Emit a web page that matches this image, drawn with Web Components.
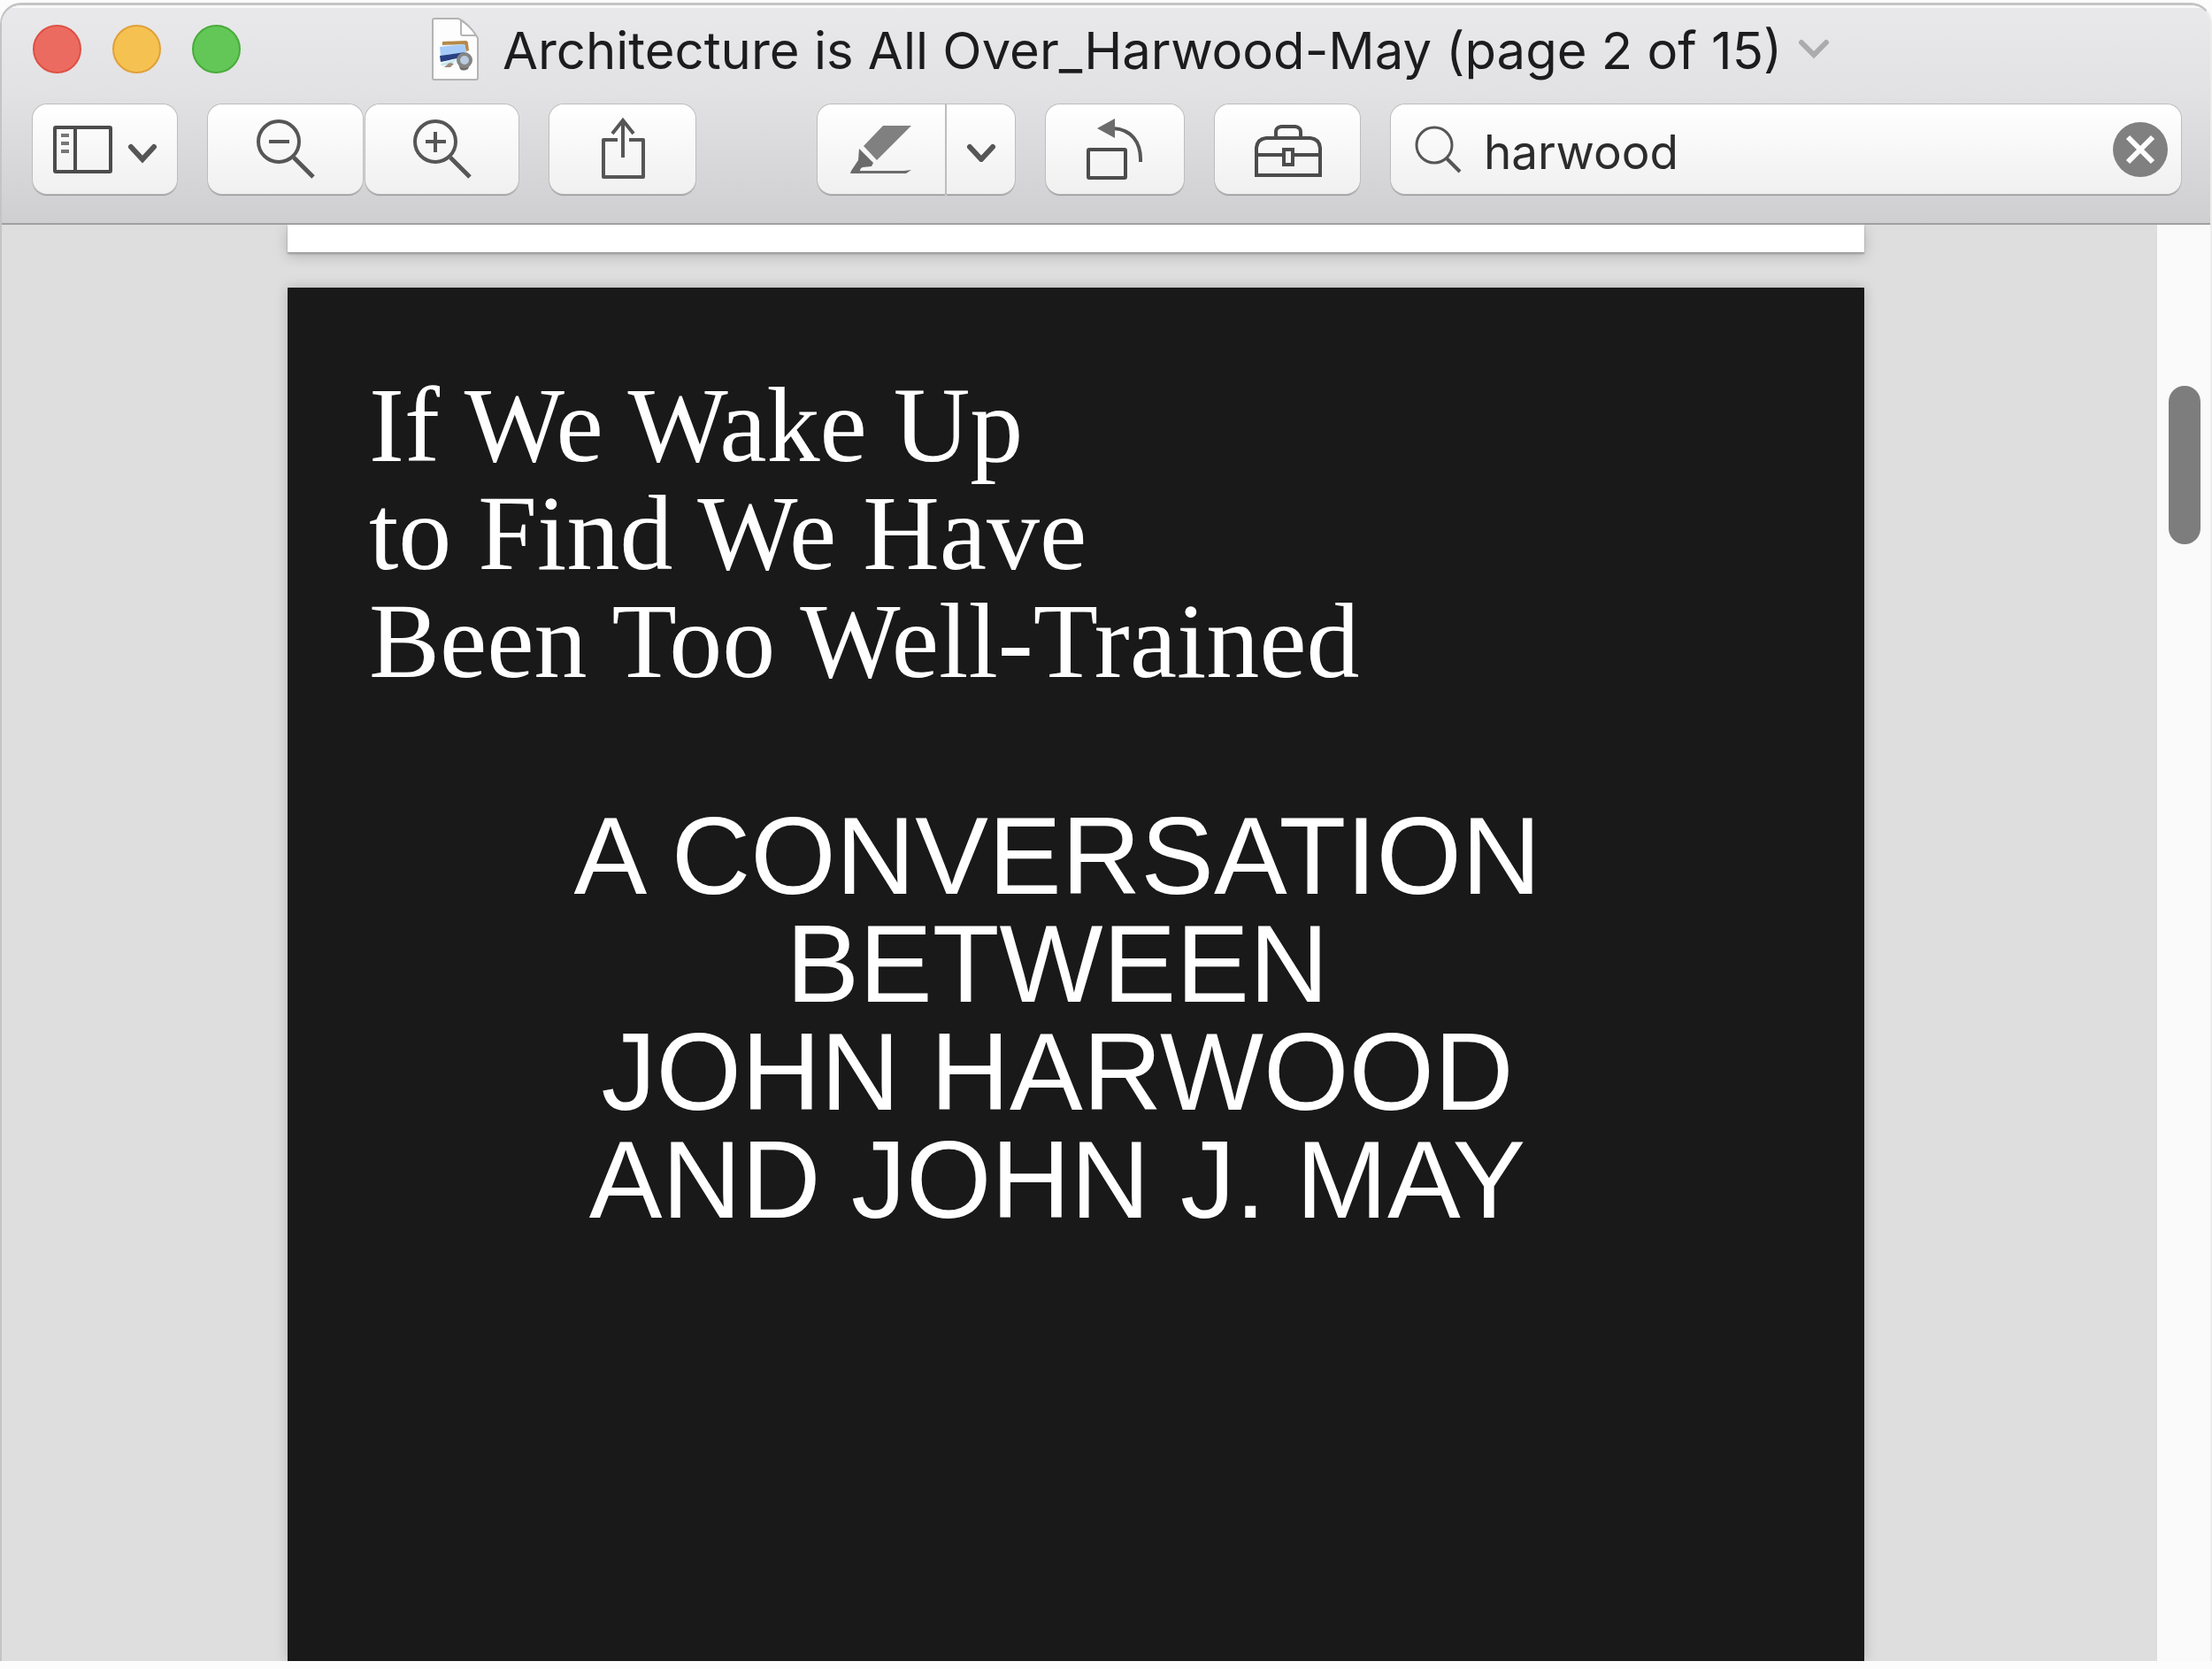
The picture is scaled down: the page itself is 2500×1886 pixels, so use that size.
<!DOCTYPE html>
<html lang="en">
<head>
  <meta charset="utf-8">
  <title>Architecture is All Over_Harwood-May</title>
  <style>
    body {
      margin: 0;
      background: #fcfcfc;
      font-family: Inter, 'Liberation Sans', sans-serif;
      color: #1c1c1e;
    }
  </style>
</head>
<body>
  <preview-window>
    <title-bar slot="title">Architecture is All Over_Harwood-May (page 2 of 15)</title-bar>

    <tool-bar slot="toolbar">
      <tool-button label="Sidebar" style="--width: 163px">
        <svg width="118" height="54" viewBox="0 0 118 54" fill="none" stroke="#4c4c4c" stroke-width="4">
          <rect x="2" y="2" width="63" height="50" rx="1" />
          <path d="M25 2v50" />
          <path d="M9 11h9M9 20h9M9 29h9" stroke="#777" />
          <path d="M88 24l13 14 13-14" stroke="#565656" stroke-width="6" stroke-linecap="round" />
        </svg>
      </tool-button>

      <tool-group>
        <tool-button label="Zoom out" style="--width: 175px">
          <svg width="66" height="68" viewBox="0 0 66 68" fill="none" stroke="#565656" stroke-width="4">
            <circle cx="25" cy="25" r="23" />
            <path d="M14 25h23" />
            <path d="M42 43l22 22" stroke-width="5" />
          </svg>
        </tool-button>
        <tool-button label="Zoom in" style="--width: 173px">
          <svg width="66" height="68" viewBox="0 0 66 68" fill="none" stroke="#565656" stroke-width="4">
            <circle cx="25" cy="25" r="23" />
            <path d="M14 25h23M25 14v23" />
            <path d="M42 43l22 22" stroke-width="5" />
          </svg>
        </tool-button>
      </tool-group>

      <tool-button label="Share" style="--width: 165px">
        <svg width="54" height="74" viewBox="0 0 54 74" fill="none" stroke="#565656" stroke-width="4">
          <path d="M21 26H5v42h45V26H34" stroke-linejoin="round" />
          <path d="M27 3v43M15 19L27 4l12 15" />
        </svg>
      </tool-button>

      <tool-spacer></tool-spacer>

      <tool-group joined>
        <tool-button label="Highlight" style="--width: 144px">
          <svg width="70" height="56" viewBox="0 0 70 56" fill="#808080">
            <path d="M37 1h32L30 40 15 24z" />
            <path d="M10 27l16 16-2 4-10 1q-3 1-3 4h50l8-1-6 4H0l1-3 8-12z" fill="#6b6b6b" />
          </svg>
        </tool-button>
        <tool-button label="Highlight options" style="--width: 77px">
          <svg width="38" height="28" viewBox="0 0 38 28" fill="none" stroke="#565656" stroke-width="6" stroke-linecap="round">
            <path d="M6 11l13 14 13-14" />
          </svg>
        </tool-button>
      </tool-group>

      <tool-button label="Rotate left" style="--width: 156px">
        <svg width="64" height="74" viewBox="0 0 64 74" fill="none" stroke="#4c4c4c" stroke-width="4">
          <rect x="2" y="37" width="42" height="32" rx="1" />
          <path d="M30 13c20 1 32 15 31 38" stroke="#565656" />
          <path d="M12 13L32 2v22z" fill="#6b6b6b" stroke="none" />
        </svg>
      </tool-button>

      <tool-button label="Show markup toolbar" style="--width: 164px">
        <svg width="78" height="64" viewBox="0 0 78 64" fill="none" stroke="#4c4c4c" stroke-width="4">
          <path d="M4 61V30q1-10 11-11h50q10 1 11 11v31z" />
          <path d="M26 19v-7q0-5 6-6h16q6 1 6 6v7" />
          <path d="M4 38h31M46 38h30" />
          <rect x="35" y="32" width="10" height="17" />
        </svg>
      </tool-button>

      <search-field label="Search" value="harwood"></search-field>
    </tool-bar>

    <document-view>
      <document-page slot="previous"></document-page>
      <document-page dark>
        <article-heading>
          If We Wake Up<br>
          to Find We Have<br>
          Been Too Well-Trained
        </article-heading>
        <article-byline>
          A CONVERSATION<br>
          BETWEEN<br>
          JOHN HARWOOD<br>
          AND JOHN J. MAY
        </article-byline>
      </document-page>
    </document-view>
  </preview-window>

  <script>
    class BaseElement extends HTMLElement {
      constructor() {
        super();
        this.attachShadow({ mode: 'open' });
        this.shadowRoot.innerHTML = this.render();
      }

      render() {
        return '<slot></slot>';
      }
    }

    class PreviewWindow extends BaseElement {
      render() {
        return `
          <style>
            :host {
              display: flex;
              flex-direction: column;
              box-sizing: border-box;
              min-height: 100vh;
              padding: 3px 0 9px;
            }

            #window {
              flex: 1;
              display: flex;
              flex-direction: column;
              border: 2px solid #c4c4c4;
              border-top-width: 3px;
              border-right-color: #ededed;
              border-bottom: 0;
              border-radius: 24px 24px 0 0;
              overflow: hidden;
            }

            header {
              background: linear-gradient(#e9e9eb, #e2e1e3 40%, #cfced0);
              border-bottom: 2px solid #a0a0a0;
              box-shadow: inset 0 3px 0 #f8f8f8;
            }
          </style>

          <div id="window">
            <header>
              <slot name="title"></slot>
              <slot name="toolbar"></slot>
            </header>
            <slot></slot>
          </div>
        `;
      }
    }

    class TitleBar extends BaseElement {
      render() {
        return `
          <style>
            :host {
              display: flex;
              align-items: center;
              height: 98px;
              padding: 0 214px 0 35px;
            }

            #lights {
              display: flex;
              gap: 35px;
            }

            #lights button {
              width: 55px;
              height: 55px;
              padding: 0;
              border: 2px solid #dd5144;
              border-radius: 50%;
              background: #ec6b60;
            }

            #lights .minimize {
              border-color: #dfa039;
              background: #f5c251;
            }

            #lights .zoom {
              border-color: #48ab3a;
              background: #63c757;
            }

            #title {
              flex: 1;
              display: flex;
              align-items: center;
              justify-content: center;
            }

            h1 {
              margin: 0 18px 0 26px;
              padding-top: 4px;
              font-size: 58px;
              font-weight: 400;
              line-height: 70px;
              white-space: nowrap;
            }
          </style>

          <div id="lights">
            <button aria-label="Close"></button>
            <button class="minimize" aria-label="Minimize"></button>
            <button class="zoom" aria-label="Zoom"></button>
          </div>

          <div id="title">
            <svg width="54" height="72" viewBox="0 0 54 72">
              <path d="M1 4q0-2 2-2h27q10 4 22 22v45q0 2-2 2H3q-2 0-2-2z" fill="#fdfdfd" stroke="#b4b4b4" stroke-width="2" />
              <path d="M33 4v15q0 2 2 2h15q-6-10-17-17z" fill="#fff" stroke="#b4b4b4" stroke-width="2" />
              <path d="M11 30l28-3 3 23-30 8z" fill="#eef6fb" />
              <path d="M12 28l26-1q3 0 3 3l1 8-3 1-2-8-25 1z" fill="#b48a48" />
              <path d="M9 34l28-3 2 9-29 4z" fill="#a6cbf8" />
              <path d="M9 44l28-4-4 6-23 5z" fill="#274083" />
              <path d="M10 53l18-5-6 6-11 1z" fill="#c4e6ee" />
              <path d="M14 57l6-5 5 1-4 4z" fill="#a08a78" />
              <path d="M30 53h13l-2 6q-6 3-9 0z" fill="#746b66" />
              <circle cx="37" cy="49" r="7" fill="#b9cbe0" stroke="#858585" stroke-width="4" />
            </svg>
            <h1><slot></slot></h1>
            <svg width="36" height="24" viewBox="0 0 36 24" fill="none" stroke="#ababad" stroke-width="6" stroke-linecap="round">
              <path d="M4 5l14 14L32 5" />
            </svg>
          </div>
        `;
      }
    }

    class ToolBar extends BaseElement {
      render() {
        return `
          <style>
            :host {
              display: flex;
              gap: 35px;
              padding: 14px 33px 33px 35px;
            }
          </style>

          <slot></slot>
        `;
      }
    }

    class ToolSpacer extends BaseElement {
      render() {
        return `
          <style>
            :host {
              width: 68px;
            }
          </style>
        `;
      }
    }

    class ToolGroup extends BaseElement {
      render() {
        return `
          <style>
            :host {
              display: flex;
              gap: 3px;
            }

            :host([joined]) {
              gap: 2px;
              border-radius: 16px;
              background: #c6c6c6;
            }

            :host([joined]) ::slotted(:first-child) {
              --radius: 16px 0 0 16px;
            }

            :host([joined]) ::slotted(:last-child) {
              --radius: 0 16px 16px 0;
            }
          </style>

          <slot></slot>
        `;
      }
    }

    class ToolButton extends BaseElement {
      render() {
        return `
          <style>
            :host {
              display: block;
              flex: none;
              width: var(--width);
            }

            button {
              display: flex;
              align-items: center;
              justify-content: center;
              width: 100%;
              height: 101px;
              padding: 0;
              border: 0;
              border-radius: var(--radius, 16px);
              background: linear-gradient(#fff, #f0f0f0);
              box-shadow: 0 0 0 1px #bdbdbd, 0 2px 1px #949494;
            }
          </style>

          <button aria-label="${this.getAttribute('label')}"><slot></slot></button>
        `;
      }
    }

    class SearchField extends BaseElement {
      constructor() {
        super();

        const input = this.shadowRoot.querySelector('input');
        const clearBtn = this.shadowRoot.querySelector('button');

        clearBtn.addEventListener('click', () => {
          input.value = '';
          input.focus();
        });
      }

      render() {
        const label = this.getAttribute('label');
        const value = this.getAttribute('value');

        return `
          <style>
            :host {
              flex: 1;
              display: flex;
              align-items: center;
              box-sizing: border-box;
              height: 101px;
              min-width: 0;
              padding: 0 15px 0 27px;
              border-radius: 16px;
              background: linear-gradient(#fff, #f0f0f0);
              box-shadow: 0 0 0 1px #bdbdbd, 0 2px 1px #949494;
            }

            label {
              display: flex;
            }

            input {
              flex: 1;
              min-width: 0;
              margin: 0;
              padding: 6px 0 0 24px;
              border: 0;
              outline: 0;
              background: none;
              color: #2c2c2c;
              font: 53px/66px Inter, 'Liberation Sans', sans-serif;
            }

            button {
              display: flex;
              padding: 0;
              border: 0;
              background: none;
            }
          </style>

          <label for="query" aria-label="${label}">
            <svg width="54" height="54" viewBox="0 0 54 54" fill="none" stroke="#565656" stroke-width="3">
              <circle cx="22" cy="22" r="20" />
              <path d="M36 37l15 15" stroke-width="4" />
            </svg>
          </label>
          <input id="query" type="text" value="${value}">
          <button aria-label="Clear">
            <svg width="62" height="62" viewBox="0 0 62 62">
              <circle cx="31" cy="31" r="31" fill="#808080" />
              <path d="M17 17l28 28M45 17L17 45" stroke="#fff" stroke-width="6" />
            </svg>
          </button>
        `;
      }
    }

    class DocumentView extends BaseElement {
      render() {
        return `
          <style>
            :host {
              flex: 1;
              display: flex;
            }

            main {
              flex: 1;
              display: flex;
              flex-direction: column;
              gap: 40px;
              padding: 0 331px 0 323px;
              background: #dedede;
              overflow: hidden;
            }

            #scrollbar {
              width: 36px;
              padding: 182px 11px 0 13px;
              background: #fafafa;
            }

            #thumb {
              height: 179px;
              border-radius: 18px;
              background: #7d7d7d;
            }
          </style>

          <main>
            <slot name="previous"></slot>
            <slot></slot>
          </main>
          <div id="scrollbar"><div id="thumb"></div></div>
        `;
      }
    }

    class DocumentPage extends BaseElement {
      render() {
        return `
          <style>
            :host {
              display: block;
              height: 31px;
              background: #fff;
              box-shadow: 0 2px 2px #999, 0 4px 16px rgba(0, 0, 0, .2);
            }

            :host([dark]) {
              flex: 1;
              height: auto;
              padding: 95px 92px;
              background: #191919;
              color: #fff;
              box-shadow: 0 0 14px rgba(0, 0, 0, .2);
            }
          </style>

          <slot></slot>
        `;
      }
    }

    class ArticleHeading extends BaseElement {
      render() {
        return `
          <style>
            :host {
              display: block;
            }

            h2 {
              margin: 0 0 120px;
              font: 400 120px/122px 'Liberation Serif', serif;
            }
          </style>

          <h2><slot></slot></h2>
        `;
      }
    }

    class ArticleByline extends BaseElement {
      render() {
        return `
          <style>
            :host {
              display: block;
              padding-right: 42px;
            }

            p {
              margin: 0;
              font: 124px/122px 'Liberation Sans', sans-serif;
              text-align: center;
            }
          </style>

          <p><slot></slot></p>
        `;
      }
    }

    customElements.define('preview-window', PreviewWindow);
    customElements.define('title-bar', TitleBar);
    customElements.define('tool-bar', ToolBar);
    customElements.define('tool-spacer', ToolSpacer);
    customElements.define('tool-group', ToolGroup);
    customElements.define('tool-button', ToolButton);
    customElements.define('search-field', SearchField);
    customElements.define('document-view', DocumentView);
    customElements.define('document-page', DocumentPage);
    customElements.define('article-heading', ArticleHeading);
    customElements.define('article-byline', ArticleByline);
  </script>
</body>
</html>
